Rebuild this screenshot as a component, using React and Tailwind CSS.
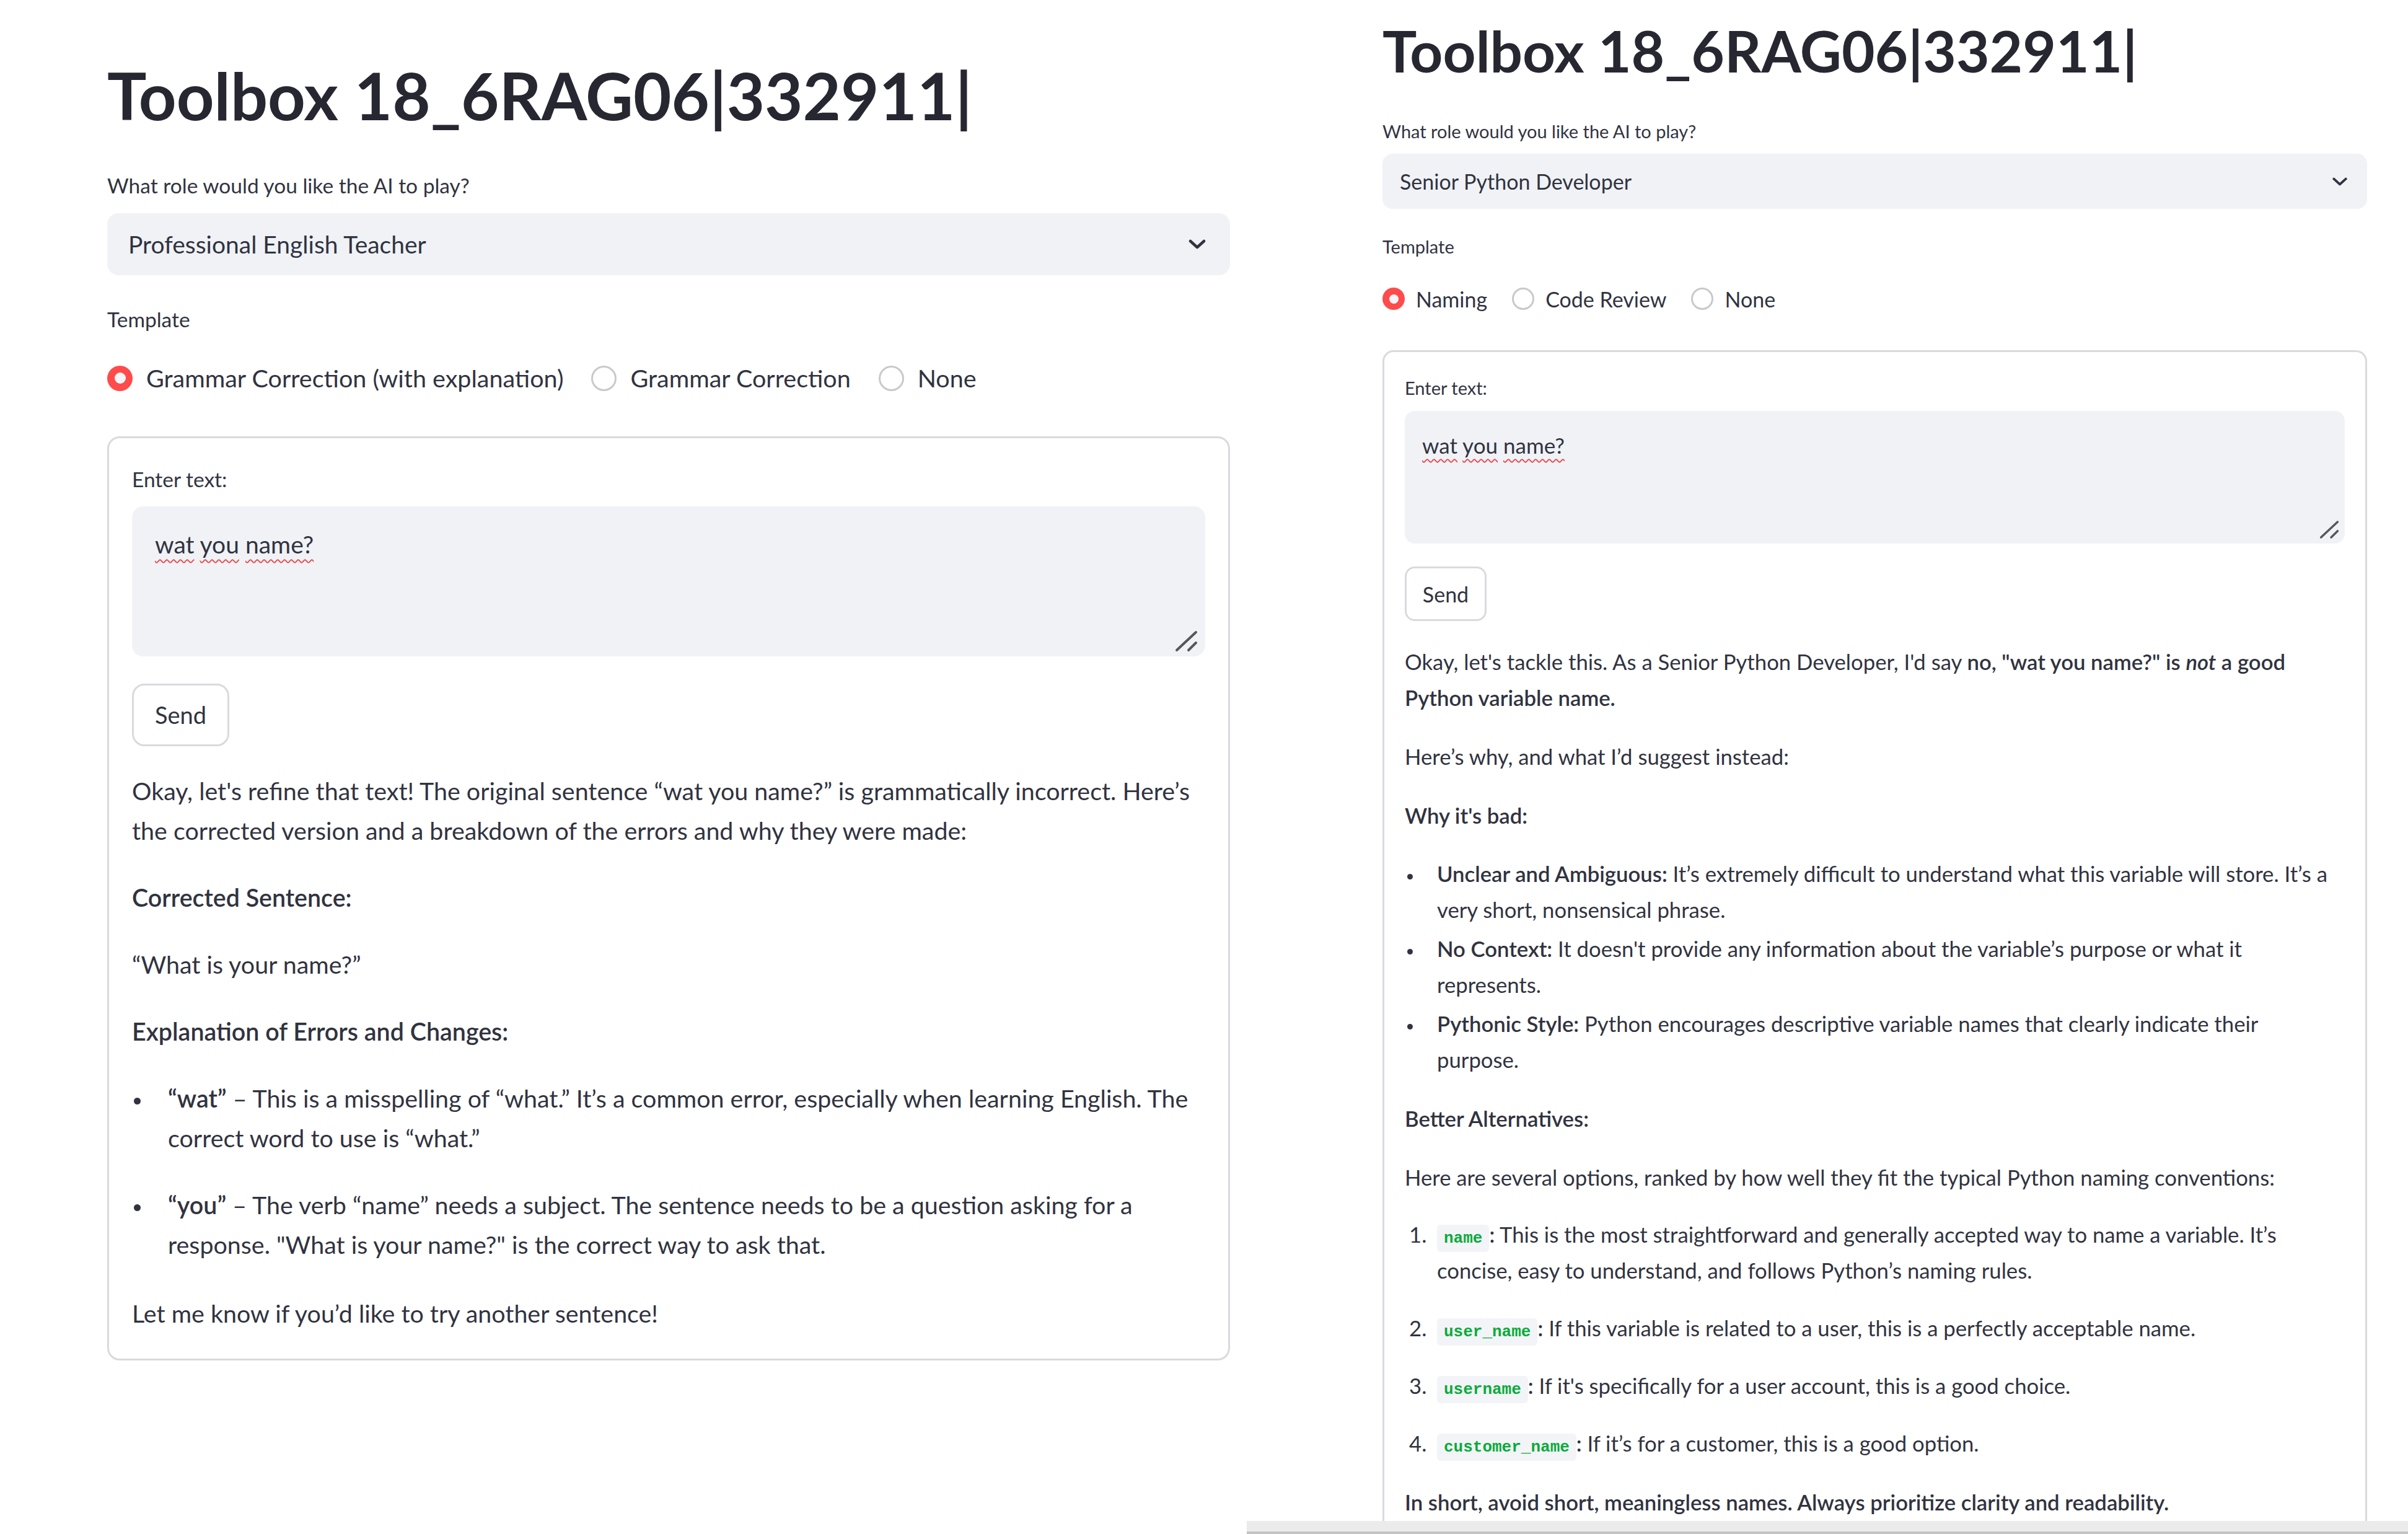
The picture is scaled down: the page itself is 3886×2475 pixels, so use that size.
import React from "react";

// Two Streamlit screenshots side by side, each at its own scale.
const LEFT = {
  col: "w-[2012px] shrink-0 pl-[173px] pr-[27px]",
  title: "pt-[89px] text-[106px] leading-[128px]",
  label: "text-[33.5px] leading-[40px]",
  roleLabel: "mt-[62px]",
  select: "mt-[25px] h-[100px] rounded-[18px] pl-[34px] pr-[39px] text-[39px]",
  chevron: "w-[28px] h-[16px]",
  template: "mt-[51px]",
  radios: "mt-[53px] h-[44px] gap-[45px] text-[39.5px]",
  option: "gap-[22px]",
  radio: "size-[41px]",
  ring: "border-[3px]",
  dot: "size-[18px]",
  card: "mt-[72px] rounded-[20px] px-[37px] pt-[46px] pb-[41px]",
  textarea: "mt-[24px] h-[242px] rounded-[18px] pl-[37px] pt-[38px] text-[39px] leading-[47px]",
  underline: "underline-offset-[9px]",
  grip: "right-[12px] bottom-[7px] w-[37px] h-[35px]",
  send: "mt-[44px] h-[101px] w-[157px] rounded-[20px] text-[38px]",
};

const RIGHT = {
  col: "flex-1 min-w-0 pl-[219px] pr-[66px]",
  title: "pt-[28px] text-[92.5px] leading-[108px]",
  label: "text-[29px] leading-[36px]",
  roleLabel: "mt-[58px]",
  select: "mt-[18px] h-[89px] rounded-[16px] pl-[28px] pr-[31px] text-[34px]",
  chevron: "w-[26px] h-[14px]",
  template: "mt-[43px]",
  radios: "mt-[46px] h-[40px] gap-[40px] text-[34px]",
  option: "gap-[18px]",
  radio: "size-[36px]",
  ring: "border-[3px]",
  dot: "size-[15px]",
  card: "mt-[63px] rounded-[18px] px-[33px] pt-[40px] pb-[80px]",
  textarea: "mt-[19px] h-[214px] rounded-[16px] pl-[28px] pt-[34px] text-[35px] leading-[42px]",
  underline: "underline-offset-[8px]",
  grip: "right-[9px] bottom-[7px] w-[32px] h-[31px]",
  send: "mt-[37px] h-[88px] w-[132px] rounded-[16px] text-[34px]",
};

function Chevron({ className }) {
  return (
    <svg viewBox="0 0 28 16" className={className} fill="none" stroke="currentColor" strokeWidth="4.5" strokeLinecap="round" strokeLinejoin="round">
      <path d="M3 3l11 10 11-10" />
    </svg>
  );
}

function Grip({ className }) {
  return (
    <svg viewBox="0 0 37 35" className={"absolute text-[#55575c] " + className} fill="none" stroke="currentColor" strokeWidth="4" strokeLinecap="round">
      <path d="M3 32L34 3" />
      <path d="M22 32L34 20" />
    </svg>
  );
}

function Radio({ s, checked, children }) {
  return (
    <div className={"flex items-center " + s.option}>
      {checked ? (
        <span className={"flex items-center justify-center rounded-full bg-[#ff4b4b] " + s.radio}>
          <span className={"rounded-full bg-[#f4f5f8] " + s.dot} />
        </span>
      ) : (
        <span className={"rounded-full border-[#c8c9cd] bg-white " + s.radio + " " + s.ring} />
      )}
      <span>{children}</span>
    </div>
  );
}

function Misspelt({ s, words }) {
  return words.map((w, i) => (
    <React.Fragment key={w}>
      {i > 0 && " "}
      <span className={"underline decoration-wavy decoration-[#e8484d] decoration-[2px] " + s.underline}>{w}</span>
    </React.Fragment>
  ));
}

function Panel({ s, title, role, options, children, footer }) {
  return (
    <div className={"flex h-full flex-col " + s.col}>
      <div className="min-h-0 flex-1 overflow-hidden">
        <h1 className={"font-bold text-[#262730] " + s.title}>{title}</h1>

        <p className={s.label + " " + s.roleLabel}>What role would you like the AI to play?</p>
        <div className={"flex items-center justify-between bg-[#f0f2f6] " + s.select}>
          <span>{role}</span>
          <Chevron className={s.chevron} />
        </div>

        <p className={s.label + " " + s.template}>Template</p>
        <div className={"flex items-center " + s.radios}>
          {options.map((o, i) => (
            <Radio key={o} s={s} checked={i === 0}>
              {o}
            </Radio>
          ))}
        </div>

        <div className={"border-[3px] border-[#d9dadd] " + s.card}>
          <p className={s.label}>Enter text:</p>
          <div className={"relative bg-[#f0f2f6] " + s.textarea}>
            <Misspelt s={s} words={["wat", "you", "name?"]} />
            <Grip className={s.grip} />
          </div>
          <button className={"flex items-center justify-center border-[3px] border-[#d9dadd] bg-white " + s.send}>Send</button>
          {children}
        </div>
      </div>
      {footer}
    </div>
  );
}

function Bullet({ gutter, dot, children }) {
  return (
    <div className="flex">
      <span className={"shrink-0 " + gutter}>
        <span className={"block rounded-full bg-[#31333f] " + dot} />
      </span>
      <p>{children}</p>
    </div>
  );
}

function Numbered({ n, children }) {
  return (
    <div className="flex">
      <span className="w-[52px] shrink-0 pl-[7px]">{n}.</span>
      <p>{children}</p>
    </div>
  );
}

function Code({ children }) {
  return (
    <code className="rounded-[6px] bg-[#f3f4f7] px-[11px] py-[7px] font-['Liberation_Mono',monospace] text-[26px] leading-none font-semibold text-[#09ab3b]">
      {children}
    </code>
  );
}

export default function App() {
  return (
    <div className="flex h-[2475px] w-[3886px] overflow-hidden bg-white font-['Lato',sans-serif] text-[#31333f]">
      <Panel
        s={LEFT}
        title="Toolbox 18_6RAG06|332911|"
        role="Professional English Teacher"
        options={["Grammar Correction (with explanation)", "Grammar Correction", "None"]}
      >
        <div className="mt-[40px] flex flex-col gap-[44px] whitespace-nowrap text-[39.4px] leading-[64px]">
          <p>
            Okay, let's refine that text! The original sentence “wat you name?” is grammatically incorrect. Here’s
            <br />
            the corrected version and a breakdown of the errors and why they were made:
          </p>
          <p className="font-semibold">Corrected Sentence:</p>
          <p>“What is your name?”</p>
          <p className="font-semibold">Explanation of Errors and Changes:</p>
          <Bullet gutter="w-[58px] pt-[31px] pl-[3px]" dot="size-[11px]">
            <strong className="font-semibold">“wat”</strong> – This is a misspelling of “what.” It’s a common error, especially when learning English. The
            <br />
            correct word to use is “what.”
          </Bullet>
          <Bullet gutter="w-[58px] pt-[31px] pl-[3px]" dot="size-[11px]">
            <strong className="font-semibold">“you”</strong> – The verb “name” needs a subject. The sentence needs to be a question asking for a
            <br />
            response. "What is your name?" is the correct way to ask that.
          </Bullet>
          <p className="mt-[3px]">Let me know if you’d like to try another sentence!</p>
        </div>
      </Panel>

      <Panel
        s={RIGHT}
        title="Toolbox 18_6RAG06|332911|"
        role="Senior Python Developer"
        options={["Naming", "Code Review", "None"]}
        footer={<div className="h-[21px] shrink-0 -ml-[219px] -mr-[66px] border-b-[4px] border-[#c4c4c4] bg-[#ebebeb]" />}
      >
        <div className="mt-[37px] flex flex-col gap-[37px] whitespace-nowrap text-[34.7px] leading-[58px]">
          <p>
            Okay, let's tackle this. As a Senior Python Developer, I'd say{" "}
            <strong className="font-semibold">
              no, "wat you name?" is <em>not</em> a good
              <br />
              Python variable name.
            </strong>
          </p>
          <p>Here’s why, and what I’d suggest instead:</p>
          <p className="font-semibold">Why it's bad:</p>
          <div className="-mt-[1px] flex flex-col gap-[5px]">
            <Bullet gutter="w-[52px] pt-[29px] pl-[4px]" dot="size-[9px]">
              <strong className="font-semibold">Unclear and Ambiguous:</strong> It’s extremely difficult to understand what this variable will store. It’s a
              <br />
              very short, nonsensical phrase.
            </Bullet>
            <Bullet gutter="w-[52px] pt-[29px] pl-[4px]" dot="size-[9px]">
              <strong className="font-semibold">No Context:</strong> It doesn't provide any information about the variable’s purpose or what it
              <br />
              represents.
            </Bullet>
            <Bullet gutter="w-[52px] pt-[29px] pl-[4px]" dot="size-[9px]">
              <strong className="font-semibold">Pythonic Style:</strong> Python encourages descriptive variable names that clearly indicate their
              <br />
              purpose.
            </Bullet>
          </div>
          <p className="font-semibold">Better Alternatives:</p>
          <p>Here are several options, ranked by how well they fit the typical Python naming conventions:</p>
          <div className="-mt-[3px] flex flex-col gap-[35px]">
            <Numbered n={1}>
              <Code>name</Code>
              <strong className="font-semibold">:</strong> This is the most straightforward and generally accepted way to name a variable. It’s
              <br />
              concise, easy to understand, and follows Python’s naming rules.
            </Numbered>
            <Numbered n={2}>
              <Code>user_name</Code>
              <strong className="font-semibold">:</strong> If this variable is related to a user, this is a perfectly acceptable name.
            </Numbered>
            <Numbered n={3}>
              <Code>username</Code>
              <strong className="font-semibold">:</strong> If it's specifically for a user account, this is a good choice.
            </Numbered>
            <Numbered n={4}>
              <Code>customer_name</Code>
              <strong className="font-semibold">:</strong> If it’s for a customer, this is a good option.
            </Numbered>
          </div>
          <p className="font-semibold">In short, avoid short, meaningless names. Always prioritize clarity and readability.</p>
        </div>
      </Panel>
    </div>
  );
}
